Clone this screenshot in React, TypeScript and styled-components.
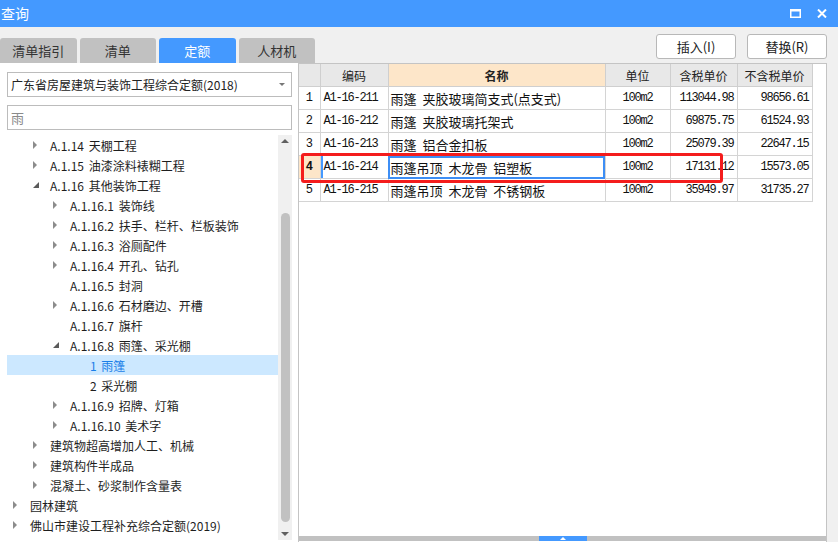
import styled, { createGlobalStyle } from "styled-components";

const GlobalStyle = createGlobalStyle`
  html, body {
    margin: 0;
    padding: 0;
    background: #f0f0f0;
  }
  body {
    font-family: "Noto Sans CJK SC", "Noto Sans", sans-serif;
    color: #222;
  }
`;

const Window = styled.div`
  width: 838px;
  height: 542px;
  display: flex;
  flex-direction: column;
  background: #f0f0f0;
  overflow: hidden;
`;

const TitleBar = styled.div`
  height: 27px;
  flex: none;
  display: flex;
  align-items: center;
  padding: 0 11px 0 1px;
  background: #4499ff;
  color: #fff;
  font-size: 14px;
`;

const Title = styled.span`
  flex: 1;
  line-height: 27px;
`;

const TitleButtons = styled.div`
  display: flex;
  align-items: center;
  gap: 16px;
`;

const Toolbar = styled.div`
  height: 36px;
  flex: none;
  display: flex;
  justify-content: space-between;
`;

const Tabs = styled.div`
  display: flex;
  align-items: flex-end;
  gap: 3px;
`;

const Tab = styled.div<{ $active?: boolean }>`
  width: 76.5px;
  height: 25px;
  border-radius: 3px 3px 0 0;
  background: ${(p) => (p.$active ? "#4499ff" : "#c1c1c1")};
  color: ${(p) => (p.$active ? "#fff" : "#333")};
  font-size: 13px;
  line-height: 25px;
  text-align: center;
`;

const Actions = styled.div`
  display: flex;
  gap: 11px;
  padding: 7px 11px 0 0;
`;

const Button = styled.div`
  width: 78px;
  height: 23px;
  border: 1px solid #b8b8b8;
  border-radius: 3px;
  background: #fff;
  font-size: 13px;
  line-height: 23px;
  text-align: center;
  color: #222;
`;

const Body = styled.div`
  flex: 1;
  display: flex;
  min-height: 0;
`;

const LeftPanel = styled.div`
  width: 298px;
  flex: none;
  display: flex;
  flex-direction: column;
  background: #fff;
  padding: 9px 6px 2px 7px;
  box-sizing: border-box;
`;

const Select = styled.div`
  height: 25px;
  flex: none;
  display: flex;
  align-items: center;
  justify-content: space-between;
  border: 1px solid #bcbcbc;
  box-sizing: border-box;
  padding: 0 6px 0 3px;
  font-size: 12px;
  color: #222;
  margin-bottom: 8px;
`;

const SelectArrow = styled.span`
  width: 0;
  height: 0;
  border-left: 3px solid transparent;
  border-right: 3px solid transparent;
  border-top: 3px solid #777;
`;

const Search = styled.div`
  height: 25px;
  flex: none;
  border: 1px solid #bcbcbc;
  box-sizing: border-box;
  padding-left: 3px;
  font-size: 13px;
  line-height: 23px;
  color: #8a8a8a;
  margin-bottom: 5px;
`;

const TreeArea = styled.div`
  flex: 1;
  display: flex;
  min-height: 0;
`;

const TreeList = styled.div`
  flex: 1;
  overflow: hidden;
`;

const TreeRow = styled.div<{ $level: number; $selected?: boolean }>`
  height: 20px;
  display: flex;
  align-items: center;
  padding-left: ${(p) => p.$level * 20}px;
  background: ${(p) => (p.$selected ? "#cce8ff" : "transparent")};
  color: ${(p) => (p.$selected ? "#1a7ee8" : "#1e1e1e")};
  font-size: 12px;
  word-spacing: 2px;
  white-space: nowrap;
`;

const Toggle = styled.span`
  width: 23px;
  height: 20px;
  flex: none;
  display: flex;
  align-items: center;
  padding-left: 6px;
  box-sizing: border-box;
`;

const Collapsed = styled.span`
  width: 0;
  height: 0;
  border-top: 4px solid transparent;
  border-bottom: 4px solid transparent;
  border-left: 4px solid #8c8c8c;
`;

const VScroll = styled.div`
  width: 14px;
  flex: none;
  display: flex;
  flex-direction: column;
  align-items: center;
  background: #f0f0f0;
`;

const ScrollArrow = styled.div<{ $down?: boolean }>`
  height: 12px;
  flex: none;
  display: flex;
  align-items: center;
  &::after {
    content: "";
    border-left: 4px solid transparent;
    border-right: 4px solid transparent;
    ${(p) =>
      p.$down ? "border-top: 4px solid #606060;" : "border-bottom: 4px solid #606060;"}
  }
`;

const ScrollTrack = styled.div`
  flex: 1;
  display: flex;
  flex-direction: column;
  padding: 66px 0 6px;
`;

const ScrollThumb = styled.div`
  flex: 1;
  width: 9px;
  border-radius: 5px;
  background: #c1c1c1;
`;

const RightPanel = styled.div`
  flex: 1;
  display: flex;
  flex-direction: column;
  margin-right: 11px;
  background: #fff;
  border: 1px solid #c4c4c4;
  border-bottom: none;
`;

const TableArea = styled.div`
  flex: 1;
  position: relative;
`;

const Grid = styled.table`
  border-collapse: collapse;
  table-layout: fixed;
  width: 513px;
  font-size: 12px;
`;

const HeadCell = styled.th<{ $hl?: boolean }>`
  height: 22px;
  padding: 0;
  border: 1px solid #cfcfcf;
  border-top: none;
  background: ${(p) => (p.$hl ? "#fde6c9" : "#e8e8e8")};
  font-weight: ${(p) => (p.$hl ? 700 : 400)};
  font-size: 12px;
  color: #222;
  text-align: center;
  &:first-child {
    border-left: none;
  }
`;

const Cell = styled.td<{ $align?: "left" | "center" | "right"; $mono?: boolean }>`
  height: 22px;
  padding: 0 3px;
  border: 1px solid #d4d4d4;
  text-align: ${(p) => p.$align || "left"};
  font-family: ${(p) =>
    p.$mono
      ? '"Liberation Mono", "DejaVu Sans Mono", monospace'
      : '"Noto Sans CJK SC", "Noto Sans", sans-serif'};
  font-size: ${(p) => (p.$mono ? "12px" : "13px")};
  letter-spacing: ${(p) => (p.$mono ? "-1.2px" : "0")};
  word-spacing: ${(p) => (p.$mono ? "0" : "3px")};
  color: #111;
  white-space: nowrap;
  overflow: hidden;
  &:first-child {
    border-left: none;
  }
`;

const NumCell = styled(Cell)<{ $active?: boolean }>`
  padding: 0;
  text-align: center;
  letter-spacing: 0;
  background: ${(p) => (p.$active ? "#fde6c9" : "#fff")};
  font-weight: ${(p) => (p.$active ? 700 : 400)};
`;

const CodeCell = styled(Cell)<{ $active?: boolean }>`
  box-shadow: ${(p) => (p.$active ? "inset 2px 0 0 #4499ff" : "none")};
`;

const NameCell = styled(Cell)<{ $active?: boolean }>`
  padding-left: 2px;
  outline: ${(p) => (p.$active ? "2px solid #3d8ef5" : "none")};
  outline-offset: -2px;
`;

const Highlight = styled.div`
  position: absolute;
  left: 2px;
  top: 89px;
  width: 422px;
  height: 30px;
  border: 3px solid #f41c1c;
  border-radius: 3px;
  box-sizing: border-box;
  pointer-events: none;
`;

const HScroll = styled.div`
  height: 5px;
  flex: none;
  margin-bottom: 1px;
  display: flex;
  justify-content: center;
  background: #c1c1c1;
`;

const HThumb = styled.div`
  width: 48px;
  display: flex;
  justify-content: center;
  align-items: flex-end;
  background: #4499ff;
  &::after {
    content: "";
    border-left: 3px solid transparent;
    border-right: 3px solid transparent;
    border-bottom: 3px solid #fff;
    margin-bottom: 1px;
  }
`;

type Node = {
  label: string;
  level: number;
  state?: "open" | "closed";
  selected?: boolean;
};

const tree: Node[] = [
  { label: "A.1.14 天棚工程", level: 1, state: "closed" },
  { label: "A.1.15 油漆涂料裱糊工程", level: 1, state: "closed" },
  { label: "A.1.16 其他装饰工程", level: 1, state: "open" },
  { label: "A.1.16.1 装饰线", level: 2, state: "closed" },
  { label: "A.1.16.2 扶手、栏杆、栏板装饰", level: 2, state: "closed" },
  { label: "A.1.16.3 浴厕配件", level: 2, state: "closed" },
  { label: "A.1.16.4 开孔、钻孔", level: 2, state: "closed" },
  { label: "A.1.16.5 封洞", level: 2 },
  { label: "A.1.16.6 石材磨边、开槽", level: 2, state: "closed" },
  { label: "A.1.16.7 旗杆", level: 2 },
  { label: "A.1.16.8 雨篷、采光棚", level: 2, state: "open" },
  { label: "1 雨篷", level: 3, selected: true },
  { label: "2 采光棚", level: 3 },
  { label: "A.1.16.9 招牌、灯箱", level: 2, state: "closed" },
  { label: "A.1.16.10 美术字", level: 2, state: "closed" },
  { label: "建筑物超高增加人工、机械", level: 1, state: "closed" },
  { label: "建筑构件半成品", level: 1, state: "closed" },
  { label: "混凝土、砂浆制作含量表", level: 1, state: "closed" },
  { label: "园林建筑", level: 0, state: "closed" },
  { label: "佛山市建设工程补充综合定额(2019)", level: 0, state: "closed" },
];

const rows = [
  { code: "A1-16-211", name: "雨篷 夹胶玻璃简支式(点支式)", unit: "100m2", tax: "113044.98", net: "98656.61" },
  { code: "A1-16-212", name: "雨篷 夹胶玻璃托架式", unit: "100m2", tax: "69875.75", net: "61524.93" },
  { code: "A1-16-213", name: "雨篷 铝合金扣板", unit: "100m2", tax: "25079.39", net: "22647.15" },
  { code: "A1-16-214", name: "雨篷吊顶 木龙骨 铝塑板", unit: "100m2", tax: "17131.12", net: "15573.05" },
  { code: "A1-16-215", name: "雨篷吊顶 木龙骨 不锈钢板", unit: "100m2", tax: "35949.97", net: "31735.27" },
];

const ACTIVE_ROW = 3;

function Expanded() {
  return (
    <svg width="6" height="6" viewBox="0 0 6 6">
      <polygon points="6,0 6,6 0,6" fill="#5a5a5a" />
    </svg>
  );
}

export default function App() {
  return (
    <Window>
      <GlobalStyle />
      <TitleBar>
        <Title>查询</Title>
        <TitleButtons>
          <svg width="11" height="9" viewBox="0 0 11 9">
            <rect x="0.75" y="1" width="9.5" height="7.25" fill="none" stroke="#fff" strokeWidth="1.5" />
            <rect x="0" y="0" width="11" height="2.5" fill="#fff" />
          </svg>
          <svg width="10" height="9" viewBox="0 0 10 9">
            <path d="M1 0.5 L9 8.5 M9 0.5 L1 8.5" stroke="#fff" strokeWidth="2" />
          </svg>
        </TitleButtons>
      </TitleBar>

      <Toolbar>
        <Tabs>
          <Tab>清单指引</Tab>
          <Tab>清单</Tab>
          <Tab $active>定额</Tab>
          <Tab>人材机</Tab>
        </Tabs>
        <Actions>
          <Button>插入(I)</Button>
          <Button>替换(R)</Button>
        </Actions>
      </Toolbar>

      <Body>
        <LeftPanel>
          <Select>
            广东省房屋建筑与装饰工程综合定额(2018)
            <SelectArrow />
          </Select>
          <Search>雨</Search>
          <TreeArea>
            <TreeList>
              {tree.map((n) => (
                <TreeRow key={n.label} $level={n.level} $selected={n.selected}>
                  <Toggle>
                    {n.state === "closed" && <Collapsed />}
                    {n.state === "open" && <Expanded />}
                  </Toggle>
                  {n.label}
                </TreeRow>
              ))}
            </TreeList>
            <VScroll>
              <ScrollArrow />
              <ScrollTrack>
                <ScrollThumb />
              </ScrollTrack>
              <ScrollArrow $down />
            </VScroll>
          </TreeArea>
        </LeftPanel>

        <RightPanel>
          <TableArea>
            <Grid>
              <colgroup>
                <col style={{ width: 21 }} />
                <col style={{ width: 68 }} />
                <col style={{ width: 217 }} />
                <col style={{ width: 65 }} />
                <col style={{ width: 67 }} />
                <col style={{ width: 75 }} />
              </colgroup>
              <thead>
                <tr>
                  <HeadCell />
                  <HeadCell>编码</HeadCell>
                  <HeadCell $hl>名称</HeadCell>
                  <HeadCell>单位</HeadCell>
                  <HeadCell>含税单价</HeadCell>
                  <HeadCell>不含税单价</HeadCell>
                </tr>
              </thead>
              <tbody>
                {rows.map((r, i) => {
                  const active = i === ACTIVE_ROW;
                  return (
                    <tr key={r.code}>
                      <NumCell $mono $active={active}>{i + 1}</NumCell>
                      <CodeCell $mono $active={active}>{r.code}</CodeCell>
                      <NameCell $active={active}>{r.name}</NameCell>
                      <Cell $mono $align="center">{r.unit}</Cell>
                      <Cell $mono $align="right">{r.tax}</Cell>
                      <Cell $mono $align="right">{r.net}</Cell>
                    </tr>
                  );
                })}
              </tbody>
            </Grid>
            <Highlight />
          </TableArea>
          <HScroll>
            <HThumb />
          </HScroll>
        </RightPanel>
      </Body>
    </Window>
  );
}
